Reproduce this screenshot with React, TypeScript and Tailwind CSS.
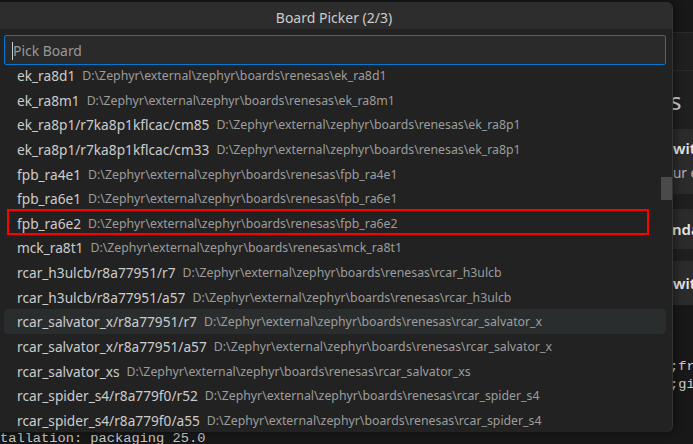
import React from "react";

const ROOT = "D:\\Zephyr\\external\\zephyr\\boards\\renesas\\";

const boards: [string, string][] = [
  ["ek_ra8d1", "ek_ra8d1"],
  ["ek_ra8m1", "ek_ra8m1"],
  ["ek_ra8p1/r7ka8p1kflcac/cm85", "ek_ra8p1"],
  ["ek_ra8p1/r7ka8p1kflcac/cm33", "ek_ra8p1"],
  ["fpb_ra4e1", "fpb_ra4e1"],
  ["fpb_ra6e1", "fpb_ra6e1"],
  ["fpb_ra6e2", "fpb_ra6e2"],
  ["mck_ra8t1", "mck_ra8t1"],
  ["rcar_h3ulcb/r8a77951/r7", "rcar_h3ulcb"],
  ["rcar_h3ulcb/r8a77951/a57", "rcar_h3ulcb"],
  ["rcar_salvator_x/r8a77951/r7", "rcar_salvator_x"],
  ["rcar_salvator_x/r8a77951/a57", "rcar_salvator_x"],
  ["rcar_salvator_xs", "rcar_salvator_xs"],
  ["rcar_spider_s4/r8a779f0/r52", "rcar_spider_s4"],
  ["rcar_spider_s4/r8a779f0/a55", "rcar_spider_s4"],
];

const ui = { fontFamily: '"Noto Sans", "Segoe UI", sans-serif' };
const mono = { fontFamily: '"Liberation Mono", "DejaVu Sans Mono", monospace' };

function Editor() {
  // what shows behind the picker: a welcome page on top, the terminal below
  return (
    <div className="flex h-full flex-col whitespace-nowrap" style={ui}>
      <div className="h-[33px] shrink-0 border-b border-[#2b2b2b] bg-[#181818]" />
      <div className="h-[38px] shrink-0 border-b border-[#2b2b2b]" />
      <div className="h-[58px] shrink-0 pl-[670px] pt-[18px] text-[24px] leading-[24px] text-[#cccccc]">
        s
      </div>
      <div className="flex h-[65px] shrink-0 flex-col rounded-l-[4px] bg-[#2b2b2b] pl-[673px] pt-[9px]">
        <span className="text-[15px] font-semibold leading-[20px] text-[#e6e6e6]">with</span>
        <span className="mt-[6px] text-[13.5px] leading-[18px] text-[#b4b4b4]">ur e</span>
      </div>
      <div className="h-[15px] shrink-0" />
      <div className="h-[40px] shrink-0 rounded-l-[4px] bg-[#2b2b2b] pl-[672px] pt-[10px] text-[15px] font-semibold leading-[20px] text-[#e6e6e6]">
        nda
      </div>
      <div className="h-[12px] shrink-0" />
      <div className="h-[43px] shrink-0 rounded-l-[4px] bg-[#2b2b2b] pl-[673px] pt-[12px] text-[15px] font-semibold leading-[20px] text-[#e6e6e6]">
        with
      </div>
      <div className="flex flex-1 flex-col border-t border-[#2b2b2b] bg-[#181818] pt-[53px] text-[13.7px] leading-[17.7px] text-[#cccccc]" style={mono}>
        <div className="pl-[670px]">;fri</div>
        <div className="pl-[670px]">;giti</div>
        <div className="h-[17.7px]" />
        <div className="h-[17.7px]" />
        <div className="pt-[1px]">tallation: packaging 25.0</div>
      </div>
    </div>
  );
}

function Row({ label, dir, index }: { label: string; dir: string; index: number }) {
  const active = index === 10;
  return (
    <div className="relative ml-[8px] mr-[6px] h-[24.64px] shrink-0">
      <div
        className={`flex h-full items-center rounded-[4px] pl-[13px] pt-[2px] whitespace-nowrap ${
          active ? "bg-[#2a2d2e]" : ""
        }`}
      >
        <span className="text-[13.7px] text-[#cccccc]">{label}</span>
        <span className="ml-[7px] text-[12.3px] text-[#9d9d9d]">
          {ROOT}
          {dir}
        </span>
      </div>
      {index === 6 && (
        <div className="absolute left-[3px] top-[-2px] h-[26px] w-[642px] border-2 border-[#ff0000]" />
      )}
    </div>
  );
}

export default function App() {
  return (
    <div className="relative h-[444px] w-[693px] overflow-hidden bg-[#1f1f1f]">
      <Editor />

      <div
        className="absolute left-[-4px] top-[2px] flex h-[430px] w-[677px] flex-col overflow-hidden rounded-[6px] border-r border-[#343434] bg-[#222222] shadow-[0_0_8px_2px_rgba(0,0,0,0.36)]"
        style={ui}
      >
        <div className="flex h-[27px] shrink-0 items-center justify-center bg-[#2d2d2d] pt-[3px] text-[14px] text-[#cccccc]">
          Board Picker (2/3)
        </div>

        <div className="ml-[8px] mr-[6px] mt-[6px] flex h-[30px] shrink-0 items-center rounded-[2px] border border-[#0078d4] bg-[#2a2a2a] pl-[7px] pt-[2px]">
          <span className="h-[18px] w-px bg-[#cccccc]" />
          <span className="text-[13.9px] text-[#989898]">Pick Board</span>
        </div>

        <div className="relative mt-[2px] flex-1 overflow-hidden">
          <div className="mt-[-4px] flex flex-col">
            {boards.map(([label, dir], i) => (
              <Row key={label} label={label} dir={dir} index={i} />
            ))}
          </div>
          <div className="absolute right-0 top-[110px] h-[23px] w-[11px] bg-[#4a4a4a]" />
        </div>
      </div>
    </div>
  );
}
